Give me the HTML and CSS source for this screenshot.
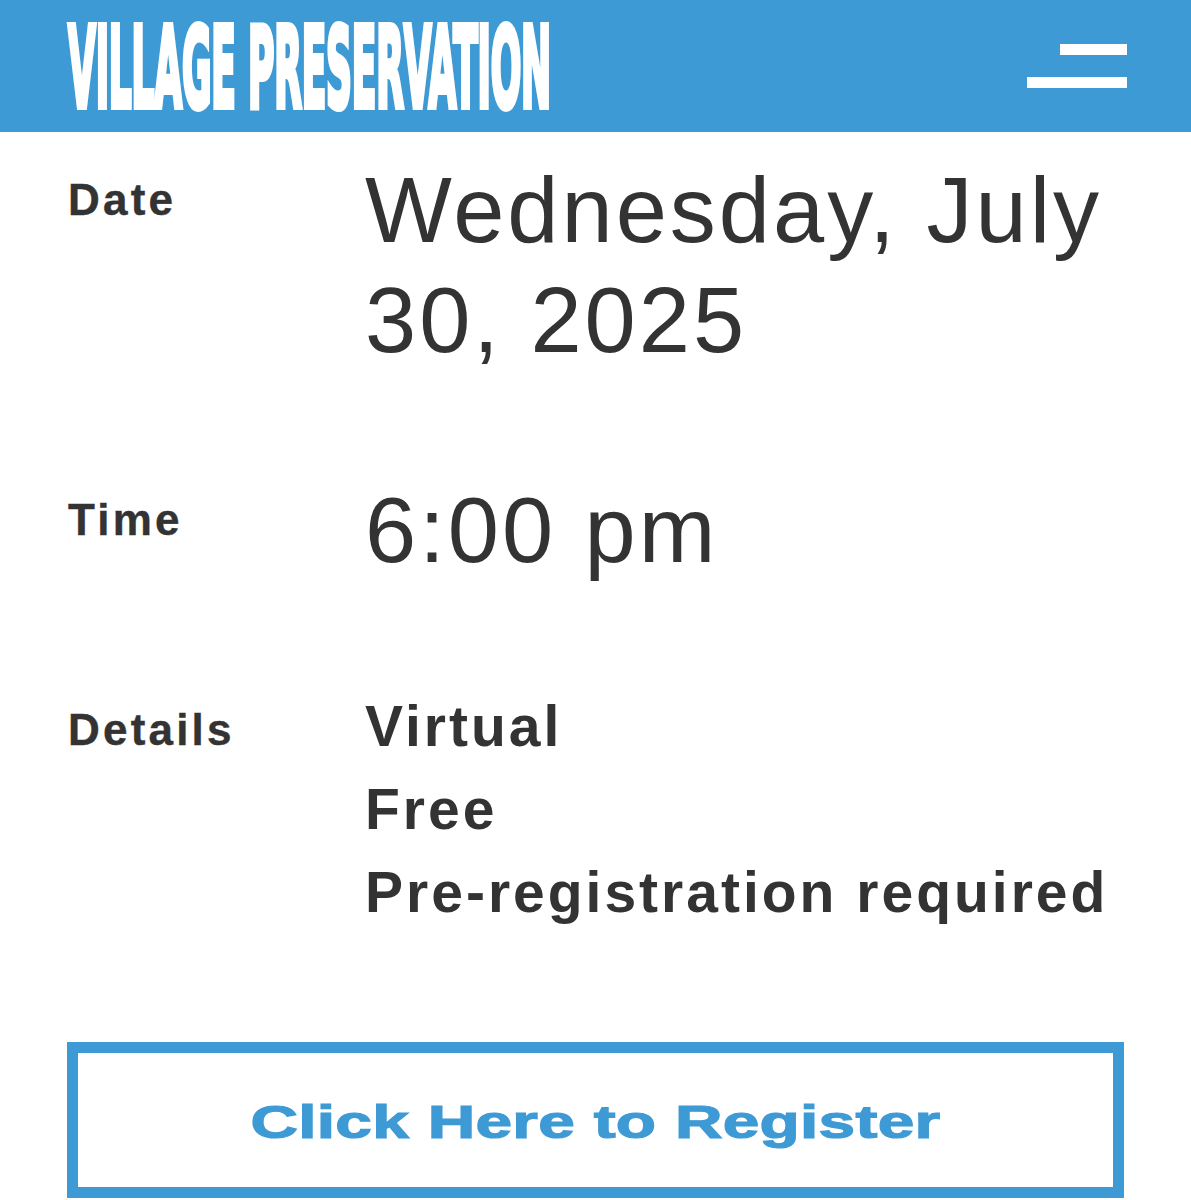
FILE: index.html
```html
<!DOCTYPE html>
<html lang="en">
<head>
<meta charset="utf-8">
<title>Village Preservation – Event</title>
<link rel="stylesheet" href="styles.css">
</head>
<body>
<header class="site-header">
  <div class="logo"><span class="logo-text">VILLAGE PRESERVATION</span></div>
  <button class="menu-toggle" aria-label="Menu">
    <span class="bar bar-short"></span>
    <span class="bar bar-long"></span>
  </button>
</header>
<main class="event">
  <dl class="event-info">
    <dt class="label">Date</dt>
    <dd class="value">Wednesday, July 30, 2025</dd>
    <dt class="label">Time</dt>
    <dd class="value">6:00 pm</dd>
    <dt class="label">Details</dt>
    <dd class="details">
      <div class="detail-line">Virtual</div>
      <div class="detail-line">Free</div>
      <div class="detail-line">Pre-registration required</div>
    </dd>
  </dl>
  <a class="register" href="#"><span class="register-text">Click Here to Register</span></a>
</main>
</body>
</html>
```
FILE: styles.css
```css
* { box-sizing: border-box; }
html, body { margin: 0; padding: 0; background: #ffffff; }
body { font-family: "Liberation Sans", Arial, sans-serif; color: #333333; overflow: hidden; }

.site-header {
  height: 132px;
  background: #3e9ad5;
  display: flex;
  align-items: center;
  justify-content: space-between;
  padding: 0 64px 0 68px;
}
.logo { display: flex; align-items: center; padding-top: 4px; }
.logo-text {
  display: inline-block;
  font-family: "DejaVu Sans Condensed", "DejaVu Sans", sans-serif;
  font-weight: bold;
  font-size: 40px;
  line-height: 40px;
  letter-spacing: -0.2px;
  color: #ffffff;
  -webkit-text-stroke: 2.2px #ffffff;
  white-space: nowrap;
  transform: scaleY(2.8);
  transform-origin: left center;
}
.menu-toggle {
  background: none;
  border: 0;
  padding: 0;
  margin: 0;
  display: flex;
  flex-direction: column;
  align-items: flex-end;
  gap: 22px;
  margin-top: -1px;
}
.bar { display: block; height: 11px; background: #ffffff; }
.bar-short { width: 67px; }
.bar-long { width: 100px; }

.event { padding: 23px 67px 0 67px; }
.event-info {
  display: grid;
  grid-template-columns: 298px 1fr;
  row-gap: 100px;
  margin: 0;
}
.label {
  font-weight: bold;
  font-size: 44px;
  line-height: 52px;
  letter-spacing: 3.2px;
  margin-top: 19px;
  padding-left: 1px;
  -webkit-text-stroke: 0.4px #333333;
}
.value {
  margin: 0;
  font-size: 92px;
  line-height: 110px;
  letter-spacing: 3px;
}
.details {
  margin: 0;
  font-weight: bold;
  font-size: 57px;
  line-height: 83px;
  letter-spacing: 3px;
}
.detail-line { white-space: nowrap; }

.register {
  margin-top: 108px;
  height: 156px;
  border: 11px solid #3e9ad5;
  display: flex;
  align-items: center;
  justify-content: center;
  text-decoration: none;
  color: #3e9ad5;
}
.register-text {
  display: inline-block;
  font-weight: bold;
  font-size: 47px;
  letter-spacing: 0.2px;
  white-space: nowrap;
  -webkit-text-stroke: 1.2px #3e9ad5;
  transform: scaleX(1.4);
  padding-top: 3px;
}
```
